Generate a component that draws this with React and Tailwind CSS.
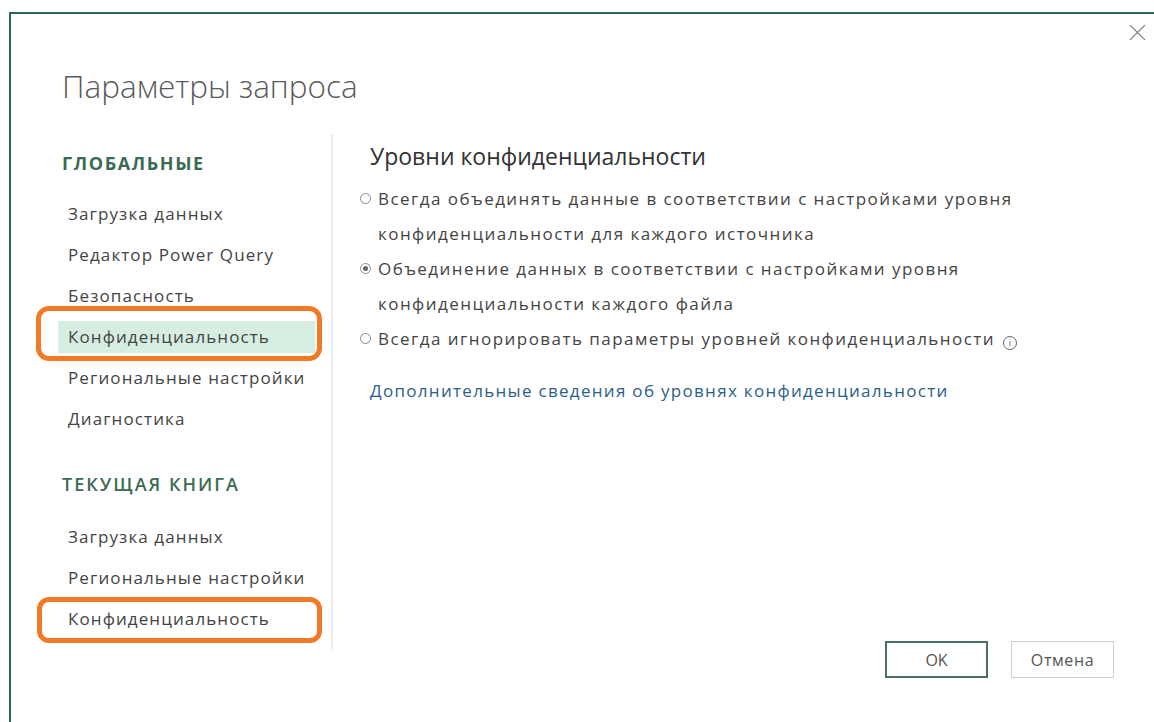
import React, { useState } from "react";

const globalItems = [
  "Загрузка данных",
  "Редактор Power Query",
  "Безопасность",
  "Конфиденциальность",
  "Региональные настройки",
  "Диагностика",
];

const bookItems = ["Загрузка данных", "Региональные настройки", "Конфиденциальность"];

const options = [
  {
    id: "always",
    lines: [
      "Всегда объединять данные в соответствии с настройками уровня",
      "конфиденциальности для каждого источника",
    ],
  },
  {
    id: "file",
    lines: [
      "Объединение данных в соответствии с настройками уровня",
      "конфиденциальности каждого файла",
    ],
  },
  {
    id: "ignore",
    lines: ["Всегда игнорировать параметры уровней конфиденциальности"],
    info: true,
  },
];

// orange hand-drawn style marker around a nav entry
function Marker({ tall }) {
  return tall ? (
    <div className="absolute left-[-22px] top-[-15px] w-[286px] h-[55px] border-[5px] border-[#f07a26] rounded-[13px] pointer-events-none" />
  ) : (
    <div className="absolute left-[-21px] top-[-6px] w-[285px] h-[46px] border-[5px] border-[#f07a26] rounded-[12px] pointer-events-none" />
  );
}

function NavItem({ label, active, marker }) {
  return (
    <div className="relative">
      <div
        className={`h-[32px] w-[257px] pl-[10px] flex items-center text-[17px] tracking-[1.1px] text-[#444] ${
          active ? "bg-[#d6ede2]" : ""
        }`}
      >
        {label}
      </div>
      {marker && <Marker tall={marker === "tall"} />}
    </div>
  );
}

function Radio({ checked }) {
  return (
    <span className="w-[11px] h-[11px] rounded-full border border-[#8a8a8a] flex items-center justify-center shrink-0">
      {checked && <span className="w-[5px] h-[5px] rounded-full bg-[#666]" />}
    </span>
  );
}

export default function App() {
  const [level, setLevel] = useState("file");

  return (
    <div className="min-h-screen bg-white pt-[12px] pl-[9px] overflow-hidden" style={{ fontFamily: '"Open Sans", "Noto Sans", sans-serif' }}>
      <div className="relative h-[720px] border-t-2 border-l-2 border-[#2e6a50]">
        <button className="absolute right-[8px] top-[10px] w-[17px] h-[17px] text-[#777]">
          <svg viewBox="0 0 16 16" className="w-full h-full" fill="none" stroke="currentColor" strokeWidth="1.1">
            <path d="M1 1 L15 15 M15 1 L1 15" />
          </svg>
        </button>

        <h1 className="pl-[51px] pt-[54px] text-[31.5px] font-light text-[#5a5a5a] leading-[36px]">
          Параметры запроса
        </h1>

        <div className="flex mt-[30px]">
          <aside className="w-[322px] pl-[47px] border-r-2 border-[#ececec] h-[515px] pt-[16px]">
            <div className="text-[18px] font-bold tracking-[1.6px] text-[#3b6b52] pl-[4px] h-[26px] flex items-center">ГЛОБАЛЬНЫЕ</div>
            <div className="mt-[22px] flex flex-col gap-[9px]">
              {globalItems.map((item, i) => (
                <NavItem key={item} label={item} active={i === 3} marker={i === 3 ? "tall" : null} />
              ))}
            </div>
            <div className="mt-[36px] text-[18px] font-semibold tracking-[2px] text-[#3b6b52] pl-[4px] h-[26px] flex items-center">ТЕКУЩАЯ КНИГА</div>
            <div className="mt-[24px] flex flex-col gap-[9px]">
              {bookItems.map((item, i) => (
                <NavItem key={item + i} label={item} marker={i === 2 ? "short" : null} />
              ))}
            </div>
          </aside>

          <main className="pl-[37px] pt-[7px]">
            <h2 className="text-[23px] text-[#333] leading-[30px]">Уровни конфиденциальности</h2>
            <div className="mt-[10px] flex flex-col">
              {options.map((opt) => (
                <label key={opt.id} className="flex items-start gap-[7px] cursor-pointer" onClick={() => setLevel(opt.id)}>
                  <span className="h-[35px] flex items-center -ml-[10px]">
                    <Radio checked={level === opt.id} />
                  </span>
                  <span className="text-[17px] tracking-[1.45px] text-[#444] leading-[35px]">
                    {opt.lines.map((l, j) => (
                      <span key={j} className="block">
                        {l}
                        {opt.info && j === opt.lines.length - 1 && (
                          <span className="inline-flex ml-[8px] w-[14px] h-[14px] rounded-full border border-[#666] items-center justify-center text-[9px] tracking-normal leading-none align-[-1px] text-[#555]">
                            i
                          </span>
                        )}
                      </span>
                    ))}
                  </span>
                </label>
              ))}
            </div>
            <a className="block mt-[22px] text-[17px] tracking-[1.3px] text-[#2a6189]" href="#">
              Дополнительные сведения об уровнях конфиденциальности
            </a>
          </main>
        </div>

        <div className="absolute left-[874px] top-[627px] flex gap-[23px]">
          <button className="w-[103px] h-[37px] border-2 border-[#4e6e62] text-[16px] text-[#555]">OK</button>
          <button className="w-[103px] h-[37px] border border-[#cfcfcf] text-[16px] tracking-[0.6px] text-[#555]">Отмена</button>
        </div>
      </div>
    </div>
  );
}
